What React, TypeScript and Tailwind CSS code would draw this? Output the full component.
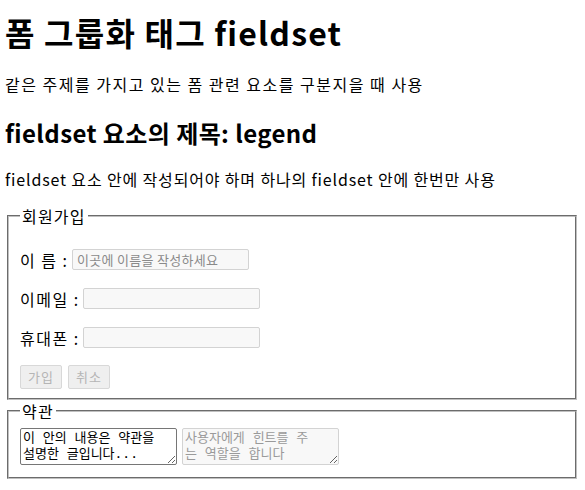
import React from "react";

const ko = { fontFamily: '"Noto Sans CJK KR", "Noto Sans", sans-serif' };

export default function App() {
  return (
    <div
      className="bg-white text-black pl-[5px] pr-[8px] pb-[12px]"
      style={ko}
    >
      <h1 className="text-[32px] font-bold leading-[42px] mt-[11px] tracking-[1.2px]">
        폼 그룹화 태그 fieldset
      </h1>
      <p className="text-[16px] leading-[21px] mt-[21px] tracking-[1.5px]">
        같은 주제를 가지고 있는 폼 관련 요소를 구분지을 때 사용
      </p>
      <h2 className="text-[24px] font-bold leading-[32px] mt-[22px] tracking-[0.4px]">
        fieldset 요소의 제목: legend
      </h2>
      <p className="text-[16px] leading-[21px] mt-[20px] tracking-[0.85px]">
        fieldset 요소 안에 작성되어야 하며 하나의 fieldset 안에 한번만 사용
      </p>

      <fieldset
        disabled
        className="mt-[16px] ml-[2px] border-2 border-[#c0c0c0] [border-style:groove] px-[11px] pt-[22px] pb-[9px]"
      >
        <legend className="px-[2px] text-[16px] leading-[20px] tracking-[1.2px]">회원가입</legend>
        <div className="flex flex-col gap-[16px]">
          <div className="flex items-center h-[23px] text-[16px]">
            <span className="w-[52px] tracking-[1.5px] whitespace-nowrap">이&nbsp;름 :</span>
            <input
              type="text"
              placeholder="이곳에 이름을 작성하세요"
              className="w-[177px] h-[21px] px-[4px] text-[13px] tracking-[0.3px] border border-[#d3d3d3] rounded-[2px] bg-[#f8f8f8] placeholder:text-[#8a8a8a]"
              style={ko}
            />
          </div>
          <div className="flex items-center h-[23px] text-[16px]">
            <span className="w-[63px] tracking-[1.5px] whitespace-nowrap">이메일 :</span>
            <input
              type="email"
              className="w-[177px] h-[21px] px-[3px] text-[13px] border border-[#d3d3d3] rounded-[2px] bg-[#f8f8f8]"
              style={ko}
            />
          </div>
          <div className="flex items-center h-[23px] text-[16px]">
            <span className="w-[63px] tracking-[1.5px] whitespace-nowrap">휴대폰 :</span>
            <input
              type="tel"
              className="w-[177px] h-[21px] px-[3px] text-[13px] border border-[#d3d3d3] rounded-[2px] bg-[#f8f8f8]"
              style={ko}
            />
          </div>
          <div className="flex items-center gap-[6px]">
            <button
              type="button"
              className="w-[42px] h-[24px] text-[13px] tracking-[1px] text-[#b5b5b5] bg-[#efefef] border border-[#d8d8d8] rounded-[2px]"
              style={ko}
            >
              가입
            </button>
            <button
              type="button"
              className="w-[42px] h-[24px] text-[13px] tracking-[1px] text-[#b5b5b5] bg-[#efefef] border border-[#d8d8d8] rounded-[2px]"
              style={ko}
            >
              취소
            </button>
          </div>
        </div>
      </fieldset>

      <fieldset className="mt-[1px] ml-[2px] border-2 border-[#c0c0c0] [border-style:groove] px-[11px] pt-[7px] pb-[12px]">
        <legend className="px-[2px] text-[16px] leading-[20px] tracking-[1.2px]">약관</legend>
        <div className="flex items-start gap-[5px]">
          <textarea
            readOnly
            className="w-[157px] h-[37px] px-[2px] py-[1px] text-[13px] leading-[16px] border border-[#767676] rounded-[2px] resize-y overflow-hidden text-black"
            style={{ fontFamily: '"DejaVu Sans Mono", "Noto Sans CJK KR", monospace' }}
            defaultValue={"이 안의 내용은 약관을\n설명한 글입니다..."}
          />
          <textarea
            disabled
            className="w-[157px] h-[37px] px-[2px] py-[1px] text-[13px] leading-[16px] border border-[#d3d3d3] rounded-[2px] bg-[#f8f8f8] resize-y overflow-hidden placeholder:text-[#9a9a9a]"
            style={{ fontFamily: '"DejaVu Sans Mono", "Noto Sans CJK KR", monospace' }}
            placeholder={"사용자에게 힌트를 주\n는 역할을 합니다"}
          />
        </div>
      </fieldset>
    </div>
  );
}
